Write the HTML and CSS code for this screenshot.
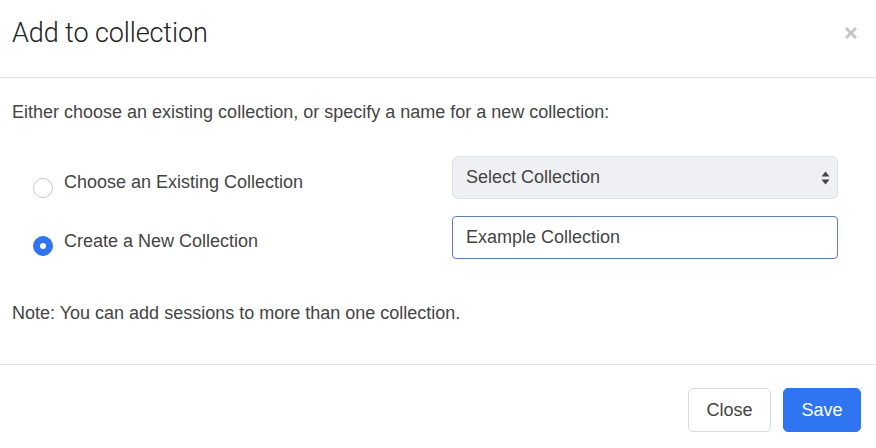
FILE: index.html
```html
<!DOCTYPE html>
<html>
<head>
<meta charset="utf-8">
<link rel="stylesheet" href="styles.css">
</head>
<body>
<div class="modal">
  <div class="modal-header">
    <h4 class="modal-title">Add to collection</h4>
    <button class="close-x" aria-label="Close">
      <svg width="14" height="14" viewBox="0 0 14 14"><path d="M2 2 L12 12 M12 2 L2 12" stroke="#c6c6c6" stroke-width="3" stroke-linecap="butt"/></svg>
    </button>
  </div>
  <div class="modal-body">
    <p class="intro">Either choose an existing collection, or specify a name for a new collection:</p>
    <div class="form-row first">
      <label class="choice"><span class="radio"></span><span class="choice-text">Choose an Existing Collection</span></label>
      <div class="select">
        <span>Select Collection</span>
        <svg class="arrows" width="9" height="16" viewBox="0 0 9 16"><path d="M4.5 1.5 L8.5 6.5 L0.5 6.5 Z M4.5 14.5 L8.5 9.5 L0.5 9.5 Z" fill="#444"/></svg>
      </div>
    </div>
    <div class="form-row second">
      <label class="choice"><span class="radio checked"></span><span class="choice-text">Create a New Collection</span></label>
      <div class="input">Example Collection</div>
    </div>
    <p class="note">Note: You can add sessions to more than one collection.</p>
  </div>
  <div class="modal-footer">
    <button class="btn btn-default">Close</button>
    <button class="btn btn-primary">Save</button>
  </div>
</div>
</body>
</html>
```
FILE: styles.css
```css
* { box-sizing: border-box; }
html, body { margin: 0; padding: 0; background: #fff; }
body {
  font-family: "Liberation Sans", Arial, sans-serif;
  font-size: 18px;
  color: #444;
  width: 876px;
  height: 448px;
  overflow: hidden;
}
.modal { width: 876px; height: 448px; display: flex; flex-direction: column; }
.modal-header {
  height: 78px;
  border-bottom: 1px solid #e3e3e3;
  padding: 18px 12px 0 12px;
  display: flex;
  justify-content: space-between;
  align-items: flex-start;
}
.modal-title {
  margin: 0;
  font-family: Roboto, "Liberation Sans", sans-serif;
  font-weight: 300;
  font-size: 27px;
  line-height: 30px;
  color: #222;
  letter-spacing: -0.1px;
}
.close-x {
  background: none;
  border: 0;
  padding: 0;
  margin: 8px 6px 0 0;
  width: 14px;
  height: 14px;
  display: block;
}
.close-x svg { display: block; }
.modal-body { padding: 0 12px; height: 287px; border-bottom: 1px solid #e3e3e3; }
.intro { margin: 22px 0 0 0; line-height: 24px; }
.form-row { display: flex; align-items: flex-start; }
.form-row.first { margin-top: 32px; }
.form-row.second { margin-top: 17px; }
.choice {
  width: 440px;
  display: flex;
  align-items: flex-start;
  padding-left: 21px;
  line-height: 24px;
}
.first .choice { padding-top: 14px; }
.second .choice { padding-top: 13px; }
.radio {
  width: 20px;
  height: 20px;
  border-radius: 50%;
  border: 1px solid #c9c9c9;
  background: #fff;
  margin-top: 7px;
  margin-right: 11px;
  flex: none;
  position: relative;
}
.first .radio { margin-top: 8px; }
.radio.checked { background: #2f74f0; border-color: #2f74f0; }
.radio.checked::after {
  content: "";
  position: absolute;
  left: 6px; top: 6px;
  width: 6px; height: 6px;
  border-radius: 50%;
  background: #fff;
}
.select {
  width: 386px;
  height: 43px;
  background: #eff0f4;
  border: 1px solid #dde0e7;
  border-radius: 6px;
  display: flex;
  align-items: center;
  justify-content: space-between;
  padding: 0 7px 0 13px;
  color: #444;
}
.input {
  width: 386px;
  height: 43px;
  border: 1px solid #5e7db4;
  border-radius: 4px;
  display: flex;
  align-items: center;
  padding: 0 13px;
  color: #444;
}
.note { margin: 42px 0 0 0; line-height: 24px; }
.modal-footer {
  flex: 1;
  display: flex;
  justify-content: flex-end;
  align-items: flex-start;
  padding: 23px 15px 0 0;
  gap: 12px;
}
.btn {
  font-family: "Liberation Sans", Arial, sans-serif;
  font-size: 18px;
  height: 44px;
  border-radius: 5px;
  padding: 0;
  line-height: 42px;
}
.btn-default { width: 83px; background: #fff; border: 1px solid #d6dce6; color: #444; }
.btn-primary { width: 78px; background: #2f74f0; border: 1px solid #2f74f0; color: #fff; }
```
